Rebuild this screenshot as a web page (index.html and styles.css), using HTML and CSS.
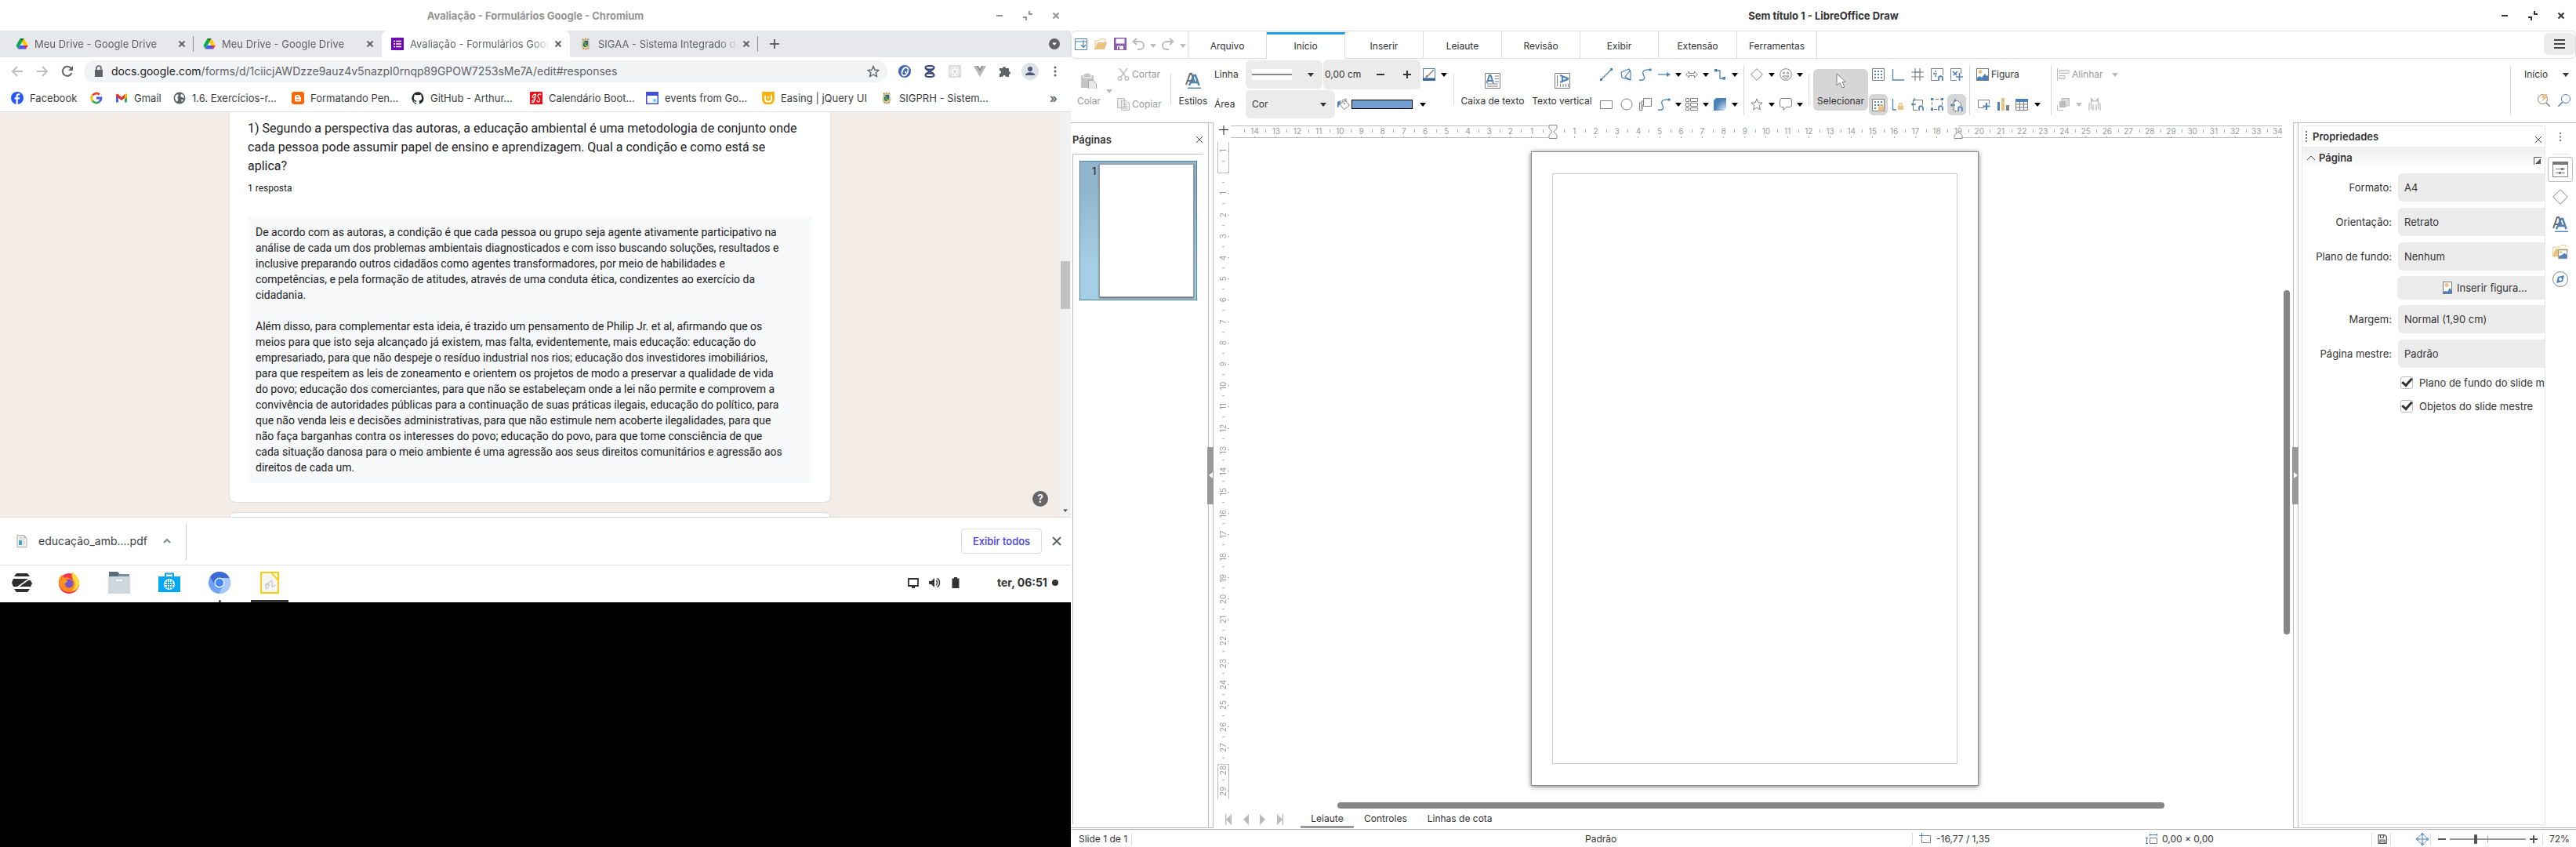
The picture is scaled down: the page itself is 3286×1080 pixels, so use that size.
FILE: index.html
```html
<!DOCTYPE html>
<html lang="pt-BR">
<head>
<meta charset="utf-8">
<title>Área de trabalho</title>
<link rel="stylesheet" href="styles.css">
</head>
<body>
<svg class="sprite" aria-hidden="true">
  <symbol id="min" viewBox="0 0 16 16"><path d="M4 8h8" stroke="currentColor" stroke-width="2"/></symbol>
  <symbol id="restore" viewBox="0 0 16 16"><path d="M10 2v4h4M2 10h4v4" fill="none" stroke="currentColor" stroke-width="2"/></symbol>
  <symbol id="close" viewBox="0 0 16 16"><path d="M4.500 4.500l7 7M11.500 4.500l-7 7" stroke="currentColor" stroke-width="2"/></symbol>
  <symbol id="thinclose" viewBox="0 0 16 16"><path d="M4 4l8 8M12 4l-8 8" stroke="currentColor" stroke-width="1"/></symbol>
  <symbol id="caret" viewBox="0 0 8 5"><path d="M0 0h8L4 5z" fill="currentColor"/></symbol>
  <symbol id="drive" viewBox="0 0 16 16"><path d="M5.500 1L0.500 10l2.500 4.500L8 5.500z" fill="#0bab50"/><path d="M5.500 1h5l5 9h-5z" fill="#ffc800"/><path d="M3 14.500L5.500 10h10L13 14.500z" fill="#4a52f0"/><path d="M10.500 10h5L13 14.500z" fill="#ea3434"/><path d="M5.500 1h5L8 5.500z" fill="#087f3b"/></symbol>
  <symbol id="crest" viewBox="0 0 16 16"><path d="M3.500 2h9v4l1 4-2 4.500h-7L2.500 10l1-4z" fill="#c7bfa0"/><path d="M4 1h1.500v2H4zM7.200 0.500h1.600v2H7.200zM10.500 1H12v2h-1.500z" fill="#c9973b"/><path d="M5 4h6v6l-3 3-3-3z" fill="#235d9c"/><path d="M5 4l3 2 3 5-2 1-4-6z" fill="#f0d13a"/><path d="M6 6l4 4M5.500 9l2 2.500" stroke="#198444" stroke-width="1.500"/><path d="M3 12h10l-1 3-4 .8L4 15z" fill="#dcc9a0"/><path d="M5 13.500h1M8 14.500h1M10.500 13.500h1" stroke="#c94c36"/></symbol>
  <symbol id="pic" viewBox="0 0 16 16"><rect x=".5" y=".5" width="15" height="15" fill="#fff" stroke="#7a7a7a"/><circle cx="5" cy="4.500" r="2.500" fill="#eac282"/><path d="M1 15v-3l3-2 3 2 4-5 2 3 2-1v6z" fill="#4d82b8"/></symbol>
  <symbol id="styles" viewBox="0 0 20 20"><path d="M1 15L6 1h2l4 11M3 10h7" fill="none" stroke="#6b6b6b" stroke-width="2"/><path d="M5 16L11 3h2l4.500 13M7.500 12h8" fill="none" stroke="#4d82b8" stroke-width="2.500"/><path d="M3 19.300h17" stroke="#4d82b8" stroke-width="1.500"/></symbol>
  <symbol id="lock" viewBox="0 0 10 10"><path d="M1 4h8v6H1z" fill="#eac282"/><path d="M3 4V1h4v3" fill="none" stroke="#eac282" stroke-width="1.500"/></symbol>
  <symbol id="magnet" viewBox="0 0 8 8"><path d="M1.200 8V4a2.800 2.800 0 0 1 5.600 0v4" fill="none" stroke="#4d82b8" stroke-width="2"/></symbol>
</svg>

<section class="desktop">
  <header class="titlebar inactive">
    <h1>Avaliação - Formulários Google - Chromium</h1>
    <div class="winbtns">
      <button aria-label="Minimizar"><svg><use href="#min"/></svg></button>
      <button aria-label="Restaurar"><svg><use href="#restore"/></svg></button>
      <button aria-label="Fechar"><svg><use href="#close"/></svg></button>
    </div>
  </header>
  <nav class="tabs">
    <div class="tab"><svg><use href="#drive"/></svg><a href="#">Meu Drive - Google Drive</a><button aria-label="Fechar guia"><svg><use href="#close"/></svg></button></div>
    <div class="tab before-active"><svg><use href="#drive"/></svg><a href="#">Meu Drive - Google Drive</a><button aria-label="Fechar guia"><svg><use href="#close"/></svg></button></div>
    <div class="tab active"><svg viewBox="0 0 16 16"><path d="M0 0h16v16H0z" fill="#7208b8"/><path d="M3 4.500h2M3 8h2M3 11.500h2M6 4.500h7M6 8h7M6 11.500h7" stroke="#fff" stroke-width="1.700"/></svg><a href="#">Avaliação - Formulários Google</a><button aria-label="Fechar guia"><svg><use href="#close"/></svg></button></div>
    <div class="tab after-active"><svg><use href="#crest"/></svg><a href="#">SIGAA - Sistema Integrado de</a><button aria-label="Fechar guia"><svg><use href="#close"/></svg></button></div>
    <button class="newtab" aria-label="Nova guia"><svg viewBox="0 0 16 16"><path d="M8 2v12M2 8h12" stroke="#5f6368" stroke-width="2"/></svg></button>
    <button class="tabmenu" aria-label="Pesquisar guias"><svg viewBox="0 0 16 16"><circle cx="8" cy="8" r="7" fill="#5f6368"/><path d="M5 6.500h6L8 10z" fill="#fff"/></svg></button>
  </nav>
  <div class="addressbar">
    <button aria-label="Voltar"><svg viewBox="0 0 16 16"><path d="M15 8H2M8 2L2 8l6 6" fill="none" stroke="#bcbec1" stroke-width="2"/></svg></button>
    <button aria-label="Avançar"><svg viewBox="0 0 16 16"><path d="M1 8h13M8 2l6 6-6 6" fill="none" stroke="#bcbec1" stroke-width="2"/></svg></button>
    <button aria-label="Recarregar"><svg viewBox="0 0 16 16"><path d="M13.500 10A6 6 0 1 1 12.500 4" fill="none" stroke="#5f6368" stroke-width="2"/><path d="M15 1v6H9z" fill="#5f6368"/></svg></button>
    <div class="omnibox">
      <svg viewBox="0 0 16 16"><path d="M3 6h10v9H3z" fill="#5f6368"/><path d="M5 6.500V4a3 3 0 0 1 6 0v2.500" fill="none" stroke="#5f6368" stroke-width="1.700"/></svg>
      <div class="url" role="textbox" aria-label="Endereço"><b>docs.google.com</b>/forms/d/1ciicjAWDzze9auz4v5nazpI0rnqp89GPOW7253sMe7A/edit#responses</div>
      <button aria-label="Favoritar"><svg viewBox="0 0 16 16"><path d="M8 1.500l2 4.500 5 .5-3.800 3.200 1.200 4.800L8 12l-4.400 2.500 1.200-4.800L1 6.500 6 6z" fill="none" stroke="#5f6368" stroke-width="1.400"/></svg></button>
    </div>
    <div class="exts">
      <svg viewBox="0 0 16 16"><circle cx="8" cy="8" r="8" fill="#3f63b8"/><ellipse cx="8.500" cy="8" rx="3.500" ry="5.500" transform="rotate(25 8 8)" fill="none" stroke="#fff" stroke-width="2"/><circle cx="9" cy="9" r="1.200" fill="#fff"/></svg>
      <svg viewBox="0 0 16 16"><g fill="none" stroke="#31427a" stroke-width="2"><ellipse cx="8" cy="3.200" rx="5.500" ry="2.300"/><path d="M3 5l10 6M13 5L3 11"/><ellipse cx="8" cy="12.800" rx="5.500" ry="2.300"/></g></svg>
      <svg viewBox="0 0 16 16"><path d="M0 0h16v16H0z" fill="#dcdcdc"/><g fill="none" stroke="#fff"><ellipse cx="8" cy="8" rx="6.500" ry="2.500"/><ellipse cx="8" cy="8" rx="6.500" ry="2.500" transform="rotate(60 8 8)"/><ellipse cx="8" cy="8" rx="6.500" ry="2.500" transform="rotate(120 8 8)"/></g></svg>
      <svg viewBox="0 0 16 16"><path d="M0 1h3.500L8 9l4.500-8H16L8 15z" fill="#b7b7b7"/><path d="M3.500 1H6l2 3.500L10 1h2.500L8 9z" fill="#8d8d8d"/></svg>
      <svg viewBox="0 0 16 16"><path d="M1 4h4a2 2 0 1 1 4 0h4v4a2 2 0 1 1 0 4v3H9a2 2 0 0 0-4 0H1v-4a2 2 0 0 0 0-4z" fill="#5f6368"/></svg>
      <svg class="avatar" viewBox="0 0 22 22"><circle cx="11" cy="11" r="11" fill="#dfe1e8"/><circle cx="11" cy="8" r="3" fill="#4c5675"/><path d="M5 16c0-5 12-5 12 0z" fill="#4c5675"/></svg>
      <svg viewBox="0 0 16 16"><g fill="#5f6368"><circle cx="8" cy="3" r="1.500"/><circle cx="8" cy="8" r="1.500"/><circle cx="8" cy="13" r="1.500"/></g></svg>
    </div>
  </div>
  <nav class="bookmarks">
    <a class="bm-fb" href="#"><svg viewBox="0 0 16 16"><circle cx="8" cy="8" r="8" fill="#2457f5"/><path d="M8.800 16V9.500H11l.4-2.300H8.800V5.800c0-.8.4-1.300 1.300-1.300h1.300V2.600C9 2 6.500 2.400 6.500 5.400v1.800h-2v2.300h2V16z" fill="#fff"/></svg>Facebook</a>
    <a class="bm-g" href="#" aria-label="Google"><svg viewBox="0 0 16 16"><g fill="none" stroke-width="2.800"><path d="M3.200 4.500A6 6 0 0 1 12 3.500" stroke="#ea4335"/><path d="M3 11.500a6 6 0 0 1 0-7" stroke="#fbbc05"/><path d="M12 12.500a6 6 0 0 1-9-1" stroke="#34a853"/><path d="M8 8h6c0 2-.6 3.300-2 4.500" stroke="#4a55f5"/></g></svg></a>
    <a class="bm-gm" href="#"><svg viewBox="0 0 16 16"><path d="M1 13.500V4h3v9.500z" fill="#4a5cf0"/><path d="M12 13.500V4h3v9.500z" fill="#34a853"/><path d="M1 3.500l2-1L8 7l5-4.500 2 1v2L8 11 1 5.500z" fill="#ea3030"/><path d="M12 4l1-1.500 2 1V7l-3 2z" fill="#fbbc04"/></svg>Gmail</a>
    <a class="bm-ex" href="#"><svg viewBox="0 0 16 16"><circle cx="8" cy="8" r="7.500" fill="#5f6368"/><path d="M3 5c3-3 5-1 3 1s1 2 0 5-3 0-4-3zM10 3c3 0 4 3 4 5l-3-1c-2 0-2-3-1-4zM10 10l3 0-2 3z" fill="#fff"/></svg>1.6. Exercícios-r...</a>
    <a class="bm-bl" href="#"><svg viewBox="0 0 16 16"><rect width="16" height="16" rx="3" fill="#ff6600"/><path d="M4 6.500A2.500 2.500 0 0 1 6.500 4h2A2.500 2.500 0 0 1 11 6.500c0 .7.300.8 1 .8V10a2.500 2.500 0 0 1-2.500 2.500h-3A2.500 2.500 0 0 1 4 10z" fill="#fff"/><path d="M6.500 6.700h2M6.500 9.800h3" stroke="#ff6600" stroke-width="1.300" stroke-linecap="round"/></svg>Formatando Pen...</a>
    <a class="bm-gh" href="#"><svg viewBox="0 0 16 16"><path d="M8 .3a8 8 0 0 0-2.500 15.500c.4.100.5-.2.500-.4v-1.500c-2.200.5-2.700-1-2.700-1-.4-1-.9-1.200-.9-1.200-.7-.5.1-.5.100-.5.800.1 1.200.8 1.200.8.700 1.300 1.900.9 2.300.7.100-.5.300-.9.500-1.100-1.800-.2-3.600-.9-3.600-4 0-.9.300-1.600.8-2.100-.1-.2-.4-1 .1-2.100 0 0 .7-.2 2.200.8a7.700 7.700 0 0 1 4 0c1.500-1 2.200-.8 2.200-.8.4 1.100.2 1.900.1 2.100.5.600.8 1.300.8 2.100 0 3.100-1.900 3.700-3.700 3.900.3.300.6.800.6 1.500v2.200c0 .2.100.5.600.4A8 8 0 0 0 8 .3z" fill="#24292e"/></svg>GitHub - Arthur...</a>
    <a class="bm-js" href="#"><svg viewBox="0 0 16 16"><rect width="16" height="16" rx="1" fill="#f00a14"/><path d="M7 3C4 3 2 7 4 7.500S8 3 7.500 3L5.500 12c-.5 2-3 2-3 .5s3-2.500 5-3.500M14 4c-1-2-4-1-4 1.500S13 8 12.500 11s-4 2.500-3.500 0" fill="none" stroke="#fff" stroke-width="1.200"/></svg>Calendário Boot...</a>
    <a class="bm-ev" href="#"><svg viewBox="0 0 16 16"><path d="M0 0h16v16H0z" fill="#3f51d8"/><path d="M1.500 5h13v9.500h-13z" fill="#fff"/><circle cx="11" cy="11" r="2" fill="#3adcf2"/></svg>events from Go...</a>
    <a class="bm-ea" href="#"><svg viewBox="0 0 16 16"><path d="M0 0h16v9a7.500 7.500 0 0 1-16 0z" fill="#fbb10a"/><path d="M4 5v4c0 5 8 5 8 0V4" fill="none" stroke="#fff" stroke-width="2"/><circle cx="8" cy="7" r="1.300" fill="#fff"/></svg>Easing | jQuery UI</a>
    <a class="bm-si" href="#"><svg><use href="#crest"/></svg>SIGPRH - Sistem...</a>
    <button class="more" aria-label="Mais favoritos">»</button>
  </nav>
  <main class="viewport">
    <div class="formpage">
      <article class="card">
        <h2>1) Segundo a perspectiva das autoras, a educação ambiental é uma metodologia de conjunto onde<br>cada pessoa pode assumir papel de ensino e aprendizagem. Qual a condição e como está se<br>aplica?</h2>
        <p class="count">1 resposta</p>
        <div class="answer">
          <p>De acordo com as autoras, a condição é que cada pessoa ou grupo seja agente ativamente participativo na<br>análise de cada um dos problemas ambientais diagnosticados e com isso buscando soluções, resultados e<br>inclusive preparando outros cidadãos como agentes transformadores, por meio de habilidades e<br>competências, e pela formação de atitudes, através de uma conduta ética, condizentes ao exercício da<br>cidadania.</p>
          <p>Além disso, para complementar esta ideia, é trazido um pensamento de Philip Jr. et al, afirmando que os<br>meios para que isto seja alcançado já existem, mas falta, evidentemente, mais educação: educação do<br>empresariado, para que não despeje o resíduo industrial nos rios; educação dos investidores imobiliários,<br>para que respeitem as leis de zoneamento e orientem os projetos de modo a preservar a qualidade de vida<br>do povo; educação dos comerciantes, para que não se estabeleçam onde a lei não permite e comprovem a<br>convivência de autoridades públicas para a continuação de suas práticas ilegais, educação do político, para<br>que não venda leis e decisões administrativas, para que não estimule nem acoberte ilegalidades, para que<br>não faça barganhas contra os interesses do povo; educação do povo, para que tome consciência de que<br>cada situação danosa para o meio ambiente é uma agressão aos seus direitos comunitários e agressão aos<br>direitos de cada um.</p>
        </div>
      </article>
      <article class="card next"></article>
    </div>
    <div class="vscroll"><i></i><svg viewBox="0 0 8 5"><use href="#caret"/></svg></div>
    <button class="help" aria-label="Ajuda">?</button>
  </main>
  <div class="downloads">
    <button class="file"><svg viewBox="0 0 16 16"><path d="M2 .5h8.500L14 4v11.500H2z" fill="#f4f4f0" stroke="#a9a9a4"/><path d="M10.500.5V4H14z" fill="#b5b5ae"/><path d="M4 3h5M4 5h8M9 8h3M9 10h3M9 12h3" stroke="#c9c9c4"/><path d="M4 7h4v6H4z" fill="#3ca6c8"/></svg><span>educação_amb....pdf</span><svg class="up" viewBox="0 0 16 16"><path d="M4 10l4-4 4 4" fill="none" stroke="#80868b" stroke-width="2"/></svg></button>
    <button class="showall">Exibir todos</button>
    <button class="dlclose" aria-label="Fechar"><svg viewBox="0 0 16 16"><path d="M3 3l10 10M13 3L3 13" stroke="#5f6368" stroke-width="2"/></svg></button>
  </div>
  <footer class="taskbar">
    <button aria-label="Menu"><svg viewBox="0 0 28 28"><path d="M7 2h14l3 4H4zM4 22h20l-3 4H7zM3 9h19L8 19H3l-2-5zM25 19H11l11-8h3l2 4z" fill="#2f2f2f"/></svg></button>
    <button aria-label="Firefox"><svg viewBox="0 0 28 28"><circle cx="14" cy="15" r="13" fill="#f7374e"/><path d="M1 14C1 8 3 6 5 4l3 4c3-2 5-1 7 1l4 1c0-5-2-6-1-9 5 4 9 8 9 14 0 7-6 11-12 11S1 22 1 14z" fill="#ff8a1c"/><path d="M18 0c5 4 10 9 9 16-1 5-5 8-9 8 4-4 5-9 2-13-2-3-3-6-2-11z" fill="#ffd93a"/><circle cx="14" cy="15" r="5.500" fill="#7b54c9"/><path d="M3 12c4-2 7-2 9 0l-3 3c-2 0-4-1-6-3z" fill="#ff9d26"/></svg></button>
    <button aria-label="Arquivos"><svg viewBox="0 0 28 28"><path d="M1 0h11l3 3h12v6H1z" fill="#546e7a"/><path d="M13 3h14v3H13z" fill="#78909c"/><path d="M0 6h28v22H0z" fill="#cfd8dc"/><path d="M9.500 9.500h9v3h-9z" fill="#fff" stroke="#b0bec5" stroke-width=".5"/></svg></button>
    <button aria-label="Programas"><svg viewBox="0 0 28 28"><path d="M9 7V2.500h10V7" fill="none" stroke="#0aa1e4" stroke-width="2"/><path d="M0 6h28v20H0z" fill="#04a9f4"/><circle cx="14" cy="16" r="7" fill="#fff"/><path d="M9 13.500h10M8 16.500h12M9 19.500h10M11.500 10.500v11M14.500 9.500v13M17.500 10.500v11" stroke="#04a9f4"/></svg></button>
    <button class="running" aria-label="Chromium"><svg viewBox="0 0 28 28"><circle cx="14" cy="14" r="14" fill="#6ea3f7"/><path d="M14 8H26.600A14 14 0 0 0 2 6.800L8.500 17A6 6 0 0 1 14 8z" fill="#3c6bd6"/><path d="M13 28A14 14 0 0 0 26.600 8H17a7 7 0 0 1 2 10z" fill="#a9c8fb"/><circle cx="14" cy="14" r="6.500" fill="#e8f0ff"/><circle cx="14" cy="14" r="5" fill="#4285f4"/></svg></button>
    <button class="focused" aria-label="LibreOffice Draw"><svg viewBox="0 0 28 28"><path d="M3 1h22v26H3z" fill="#f5f5f5" stroke="#fbcc12" stroke-width="2"/><path d="M16 1h9v10z" fill="#fff" stroke="#fbcc12" stroke-width="2"/><path d="M8 17c2-2 5-3 5 0s-4 7-4 3 4-6 6-8 3 2 2 5 1 3 4 0" fill="none" stroke="#c4c4c4" stroke-width="1.200"/></svg></button>
    <div class="tray">
      <svg viewBox="0 0 16 16"><path d="M2 3h12v9H2zM6 14h4" fill="none" stroke="#333" stroke-width="1.800"/></svg>
      <svg viewBox="0 0 16 16"><path d="M1 6h3l4-4v12L4 10H1z" fill="#333"/><path d="M10 5c2 1 2 5 0 6M11.500 2.500c4 2 4 9 0 11" fill="none" stroke="#333" stroke-width="1.400"/></svg>
      <svg viewBox="0 0 16 16"><path d="M6 1h4v1.500h2.500V15h-9V2.500H6z" fill="#333"/></svg>
      <time>ter, 06:51</time><i></i>
    </div>
  </footer>
</section>

<section class="draw">
  <header class="titlebar">
    <h1>Sem título 1 - LibreOffice Draw</h1>
    <div class="winbtns">
      <button aria-label="Minimizar"><svg><use href="#min"/></svg></button>
      <button aria-label="Restaurar"><svg><use href="#restore"/></svg></button>
      <button aria-label="Fechar"><svg><use href="#close"/></svg></button>
    </div>
  </header>
  <nav class="menubar">
    <div class="quick">
      <button aria-label="Personalizar"><svg viewBox="0 0 16 16"><path d="M.5 1.500h15v14H.5zM.5 5h15" fill="none" stroke="#4d82b8"/><path d="M11 3v9M8 9l3 3.500L14 9" fill="none" stroke="#4d82b8" stroke-width="1.200"/></svg></button>
      <button aria-label="Abrir"><svg viewBox="0 0 16 16"><path d="M1 14V4h4l2-2h7v4" fill="none" stroke="#eac282"/><path d="M0 15L4 6h12l-3 9z" fill="#eac282"/></svg></button>
      <button aria-label="Salvar"><svg viewBox="0 0 16 16"><path d="M0 0h16v16H0z" fill="#8e5aab"/><path d="M2.500 1.500h11v6h-11zM4 10.500h8V15H4z" fill="#fff"/><path d="M5 11.500h2V15H5z" fill="#8e5aab"/></svg></button>
      <button aria-label="Desfazer"><svg viewBox="0 0 16 16"><path d="M6 1L1.500 5 6 9M2 5h8a4.500 4.500 0 0 1 0 10H7" fill="none" stroke="#bcbcbc" stroke-width="2"/></svg></button>
      <svg class="car off"><use href="#caret"/></svg>
      <button aria-label="Refazer"><svg viewBox="0 0 16 16"><path d="M10 1l4.500 4L10 9M14 5H6a4.500 4.500 0 0 0 0 10h3" fill="none" stroke="#bcbcbc" stroke-width="2"/></svg></button>
      <svg class="car off"><use href="#caret"/></svg>
    </div>
    <a href="#">Arquivo</a><a class="current" href="#">Início</a><a href="#">Inserir</a><a href="#">Leiaute</a><a href="#">Revisão</a><a href="#">Exibir</a><a href="#">Extensão</a><a href="#">Ferramentas</a>
    <button class="burger" aria-label="Menu"><svg viewBox="0 0 16 16"><path d="M1 3h14M1 8h14M1 13h14" stroke="#444" stroke-width="2"/></svg></button>
  </nav>

  <div class="toolbar">
    <button class="big paste off"><svg viewBox="0 0 20 20"><path d="M0 3h16v16H0z" fill="#c4c4c4"/><path d="M3 1h3V0h4v1h3v5H3z" fill="#c4c4c4" stroke="#fff"/><path d="M9.500 9.500h6l4 4v7h-10z" fill="#e8e8e8" stroke="#aaa"/></svg>Colar</button>
    <svg class="car off paste-car"><use href="#caret"/></svg>
    <div class="stack edit">
      <button class="wide off"><svg viewBox="0 0 16 16"><path d="M3 0l8 11M13 0L5 11" stroke="#bbb" stroke-width="1.300"/><circle cx="3.500" cy="13" r="2.300" fill="none" stroke="#bbb" stroke-width="1.300"/><circle cx="12.500" cy="13" r="2.300" fill="none" stroke="#bbb" stroke-width="1.300"/></svg>Cortar</button>
      <button class="wide off"><svg viewBox="0 0 16 16"><path d="M.5.500h9v12h-9zM5.500 3.500h6l4 3v9h-10zM7 8h6M7 10.500h6M7 13h6" fill="#eee" stroke="#bbb"/></svg>Copiar</button>
    </div>
    <i class="sep"></i>
    <button class="big est"><svg><use href="#styles"/></svg>Estilos</button>
    <div class="stack labels"><label for="line">Linha</label><label for="area">Área</label></div>
    <div class="stack props">
      <div class="row">
        <div class="linesel"><select id="line" aria-label="Linha"><option></option></select><i></i><svg class="car"><use href="#caret"/></svg></div>
        <div class="spin"><input value="0,00 cm" aria-label="Largura da linha"><button aria-label="Menos"><svg viewBox="0 0 16 16"><path d="M3 8h10" stroke="#333" stroke-width="2"/></svg></button><button aria-label="Mais"><svg viewBox="0 0 16 16"><path d="M3 8h10M8 3v10" stroke="#333" stroke-width="2"/></svg></button></div>
        <button class="ic" aria-label="Cor da linha"><svg viewBox="0 0 16 16"><path d="M.5.500h15V15H.5z" fill="#fff" stroke="#4d82b8"/><path d="M0 12.500h16V16H0z" fill="#3465a4"/><path d="M14 2L6 10l-2 2 1-3" fill="none" stroke="#777" stroke-width="1.300"/></svg></button>
        <svg class="car black"><use href="#caret"/></svg>
      </div>
      <div class="row">
        <div class="areasel"><select id="area"><option>Cor</option></select><svg class="car"><use href="#caret"/></svg></div>
        <button class="ic" aria-label="Cor da área"><svg viewBox="0 0 16 16"><path d="M0 12V5l4-2v3l-3 6z" fill="#4d82b8"/><path d="M3 8l7-5 5.500 6.500-7 5z" fill="#fff" stroke="#808080"/><path d="M6 6V3l5-2v4" fill="none" stroke="#808080"/><circle cx="9" cy="7" r="1" fill="#808080"/></svg></button>
        <i class="swatch"></i>
        <svg class="car black"><use href="#caret"/></svg>
      </div>
    </div>
    <i class="sep"></i>
    <button class="big txt"><svg viewBox="0 0 20 20"><path d="M.5.500h19v19H.5zM13 4h5M13 7.500h5M13 11h5M3 14h14M3 17h14" fill="none" stroke="#808080"/><path d="M2.500 13L6 3h1.500L11 13M4 10h6" fill="none" stroke="#4d82b8" stroke-width="2"/></svg>Caixa de texto</button>
    <button class="big vtxt"><svg viewBox="0 0 20 20"><path d="M.5.500h19v19H.5zM3.500 3v14M7.500 14v4M11 14v4M14.500 14v4M17.500 14v4" fill="none" stroke="#808080"/><path d="M7 3l10 4v1L7 12M10 4v7" fill="none" stroke="#4d82b8" stroke-width="2"/></svg>Texto vertical</button>
    <div class="grid lines">
      <svg viewBox="0 0 16 16"><path d="M2 14L14 2" stroke="#4d82b8" stroke-width="1.300"/><path d="M0 13h3v3H0zM13 0h3v3h-3z" fill="#4d82b8"/></svg>
      <svg viewBox="0 0 16 16"><path d="M1 5l10-4 2 4 0 10L2 12zM13 2L6 11l7 4" fill="none" stroke="#4d82b8" stroke-width="1.200"/></svg>
      <svg viewBox="0 0 16 16"><path d="M0 15c5 1 8-1 6-5S3 1 14 2" fill="none" stroke="#4d82b8" stroke-width="1.300"/><path d="M12.500.500h3v3h-3z" fill="#4d82b8"/></svg>
      <svg viewBox="0 0 16 16"><path d="M0 8h12" stroke="#4d82b8" stroke-width="1.300"/><path d="M11 5l5 3-5 3z" fill="#4d82b8"/></svg>
      <svg class="car black"><use href="#caret"/></svg>
      <svg viewBox="0 0 16 16"><path d="M.5 8L4.500 4v2.500h7V4l4 4-4 4V9.500h-7V12z" fill="none" stroke="#808080"/></svg>
      <svg class="car black"><use href="#caret"/></svg>
      <svg viewBox="0 0 16 16"><path d="M3 3h5v10h4" fill="none" stroke="#4d82b8" stroke-width="1.300"/><path d="M1 1h3.500v3.500H1zM11.500 11H15v3.500h-3.500z" fill="#4d82b8"/></svg>
      <svg class="car black"><use href="#caret"/></svg>
      <svg viewBox="0 0 16 16"><path d="M.5 3.500h15v10H.5z" fill="none" stroke="#808080"/></svg>
      <svg viewBox="0 0 16 16"><circle cx="8" cy="8" r="7" fill="none" stroke="#808080"/></svg>
      <svg viewBox="0 0 16 16"><path d="M5.500.500h10v10h-10zM5 4H3v10M.5 15.500V6H3M.5 15.500H4V8" fill="none" stroke="#808080"/></svg>
      <svg viewBox="0 0 16 16"><path d="M0 15c5 1 8-1 6-5S3 1 14 2" fill="none" stroke="#4d82b8" stroke-width="1.300"/><path d="M12.500.500h3v3h-3z" fill="#4d82b8"/></svg>
      <svg class="car black"><use href="#caret"/></svg>
      <svg viewBox="0 0 16 16"><path d="M.5.500h4v4h-4zM6.500.500h9v4h-9zM.5 6.500h4v4h-4zM6.500 6.500h9v4h-9zM.5 12.500h4v3h-4zM6.500 12.500h9v3h-9z" fill="none" stroke="#808080"/></svg>
      <svg class="car black"><use href="#caret"/></svg>
      <svg viewBox="0 0 16 16"><defs><radialGradient id="gr" cx="1" cy="1" r=".9"><stop offset="0" stop-color="#e6eef7"/><stop offset="1" stop-color="#4d82b8"/></radialGradient></defs><path d="M3 0h13v13l-3 3H0V3z" fill="url(#gr)"/></svg>
      <svg class="car black"><use href="#caret"/></svg>
    </div>
    <i class="sep tall"></i>
    <div class="grid shapes">
      <svg viewBox="0 0 16 16"><path d="M8 .7L15.300 8 8 15.300.7 8z" fill="none" stroke="#808080"/></svg>
      <svg class="car black"><use href="#caret"/></svg>
      <svg viewBox="0 0 16 16"><circle cx="8" cy="8" r="7.300" fill="none" stroke="#808080"/><circle cx="5.500" cy="6" r="1" fill="none" stroke="#808080"/><circle cx="10.500" cy="6" r="1" fill="none" stroke="#808080"/><path d="M4 10c2 4 6 4 8 0z" fill="none" stroke="#808080"/></svg>
      <svg class="car black"><use href="#caret"/></svg>
      <svg viewBox="0 0 16 16"><path d="M8 1l2 5h5l-4 3.500 1.500 5.500L8 12l-4.500 3L5 9.500 1 6h5z" fill="none" stroke="#808080"/></svg>
      <svg class="car black"><use href="#caret"/></svg>
      <svg viewBox="0 0 16 16"><path d="M3 .5h10a2.500 2.500 0 0 1 2.500 2.500v6a2.500 2.500 0 0 1-2.500 2.500H8.500L5 15.500v-4H3A2.500 2.500 0 0 1 .5 9V3A2.500 2.500 0 0 1 3 .5z" fill="none" stroke="#808080"/></svg>
      <svg class="car black"><use href="#caret"/></svg>
    </div>
    <i class="sep mid"></i>
    <button class="big select"><svg viewBox="0 0 20 20"><path d="M5 1v15l4-3.500L12 19l3-1-3-6.500h4.500z" fill="#fff" stroke="#808080"/></svg>Selecionar</button>
    <div class="grid snaps">
      <svg viewBox="0 0 16 16"><path d="M.5.500h15v15H.5z" fill="#fff" stroke="#808080"/><path d="M3 4h11M3 8h11M3 12h11" stroke="#4d82b8" stroke-width="2" stroke-dasharray="2 2"/></svg>
      <svg viewBox="0 0 16 16"><path d="M1.500 1v14H16" fill="none" stroke="#4d82b8" stroke-width="1.300"/></svg>
      <svg viewBox="0 0 16 16"><path d="M5 0v16M11 0v16M0 5h16M0 11h16" stroke="#808080" stroke-width="1.200"/><path d="M4.500 5h7" stroke="#4d82b8"/></svg>
      <svg viewBox="0 0 16 16"><path d="M9 15.500H.5V.5h15V9" fill="none" stroke="#808080"/><path d="M6 3v8M3 7h6" stroke="#4d82b8" stroke-width="1.500" stroke-dasharray="2 1"/><use href="#magnet" x="9" y="9" width="7" height="7"/></svg>
      <svg viewBox="0 0 16 16"><path d="M8 15.500H.5V.5h13V7" fill="none" stroke="#808080"/><path d="M3 4l5 5M9 4L4 9M11.500 6v10M7 11h9" stroke="#4d82b8" stroke-width="1.700"/></svg>
      <span class="on"><svg viewBox="0 0 16 16"><path d="M.5.500h15v15H.5z" fill="#fff" stroke="#808080"/><path d="M3 4h11M3 8h11M3 12h4" stroke="#4d82b8" stroke-width="2" stroke-dasharray="2 2"/><use href="#lock" x="7" y="6" width="9" height="10"/></svg></span>
      <svg viewBox="0 0 16 16"><path d="M1.500 1v14H6" fill="none" stroke="#4d82b8" stroke-width="1.300"/><use href="#lock" x="7" y="6" width="9" height="9"/></svg>
      <svg viewBox="0 0 16 16"><path d="M8 15.500H2.500V2.500h12V9" fill="none" stroke="#808080"/><path d="M0 8h6M2 6v4M4 0v4" stroke="#4d82b8" stroke-width="1.300"/><use href="#magnet" x="9" y="9" width="7" height="7"/></svg>
      <svg viewBox="0 0 16 16"><path d="M8 14.500H1.500V1.500h13V9" fill="none" stroke="#808080" stroke-dasharray="4 2"/><path d="M0 0h3v3H0zM13 0h3v3h-3zM0 13h3v3H0z" fill="#4d82b8"/><use href="#magnet" x="9" y="9" width="7" height="7"/></svg>
      <span class="on"><svg viewBox="0 0 16 16"><path d="M8 15.500H4.500V2.500h5l4 4V9" fill="#fff" stroke="#808080"/><path d="M0 8h6M2 6v4M6 0v4" stroke="#4d82b8" stroke-width="1.300"/><use href="#magnet" x="9" y="9" width="7" height="7"/></svg></span>
    </div>
    <i class="sep tall"></i>
    <div class="stack insert">
      <button class="wide"><svg><use href="#pic"/></svg>Figura</button>
      <div class="row icons">
        <svg viewBox="0 0 16 16"><path d="M8 12.500H.5v-10h14V8" fill="none" stroke="#808080"/><path d="M11 6v9M6.500 10.500h9" stroke="#4d82b8" stroke-width="2"/></svg>
        <svg viewBox="0 0 16 16"><path d="M1 5h3v11H1z" fill="#4d82b8"/><path d="M6 0h4v16H6z" fill="#eac282"/><path d="M12 9h4v7h-4z" fill="#808080"/></svg>
        <svg viewBox="0 0 16 16"><path d="M.5 1.500h15v14H.5zM.5 8h15M.5 12h15M5.500 4v11M10.500 4v11" fill="none" stroke="#808080"/><path d="M0 1h16v4H0z" fill="#4d82b8"/></svg>
        <svg class="car black"><use href="#caret"/></svg>
      </div>
    </div>
    <i class="sep tall"></i>
    <div class="stack arrange">
      <button class="wide off"><svg viewBox="0 0 16 16"><path d="M.5 0v16M3 2.500h12v4H3zM3 9.500h7v4H3z" fill="#eee" stroke="#bbb"/></svg>Alinhar<svg class="car off"><use href="#caret"/></svg></button>
      <div class="row icons">
        <svg viewBox="0 0 16 16"><path d="M6 .5h9.500V10H6z" fill="#ddd" stroke="#bbb"/><path d="M3 4h8v8H3z" fill="#bbb"/><path d="M.5 9v6.500H8" fill="none" stroke="#bbb"/></svg>
        <svg class="car off"><use href="#caret"/></svg>
        <svg viewBox="0 0 16 16"><path d="M1 6v10M3.500 0v14M12.500 0v14M15 6v10M6 16V8M10 16V8M4 4h8M4 1l3 3M12 1L9 4" fill="none" stroke="#bbb" stroke-width="1.200"/></svg>
      </div>
    </div>
    <div class="grow"></div>
    <i class="sep tall"></i>
    <div class="stack home">
      <button class="wide">Início<svg class="car"><use href="#caret"/></svg></button>
      <div class="row icons">
        <svg viewBox="0 0 16 16"><circle cx="6.500" cy="6.500" r="6" fill="none" stroke="#808080"/><path d="M11 11l5 5" stroke="#808080" stroke-width="1.500"/><path d="M7 0h6l-3 4h2l-7 6 2-5H5z" fill="#eac282"/></svg>
        <svg viewBox="0 0 16 16"><circle cx="10" cy="6" r="5.500" fill="none" stroke="#4d82b8"/><path d="M6 10l-6 6" stroke="#4d82b8" stroke-width="1.500"/></svg>
      </div>
    </div>
  </div>

  <div class="work">
    <aside class="pages">
      <header><h2>Páginas</h2><button aria-label="Fechar"><svg><use href="#thinclose"/></svg></button></header>
      <div class="list"><button class="thumb"><b>1</b><i></i></button></div>
    </aside>
    <div class="splitter"><i><svg viewBox="0 0 5 8"><path d="M5 0v8L0 4z" fill="#fff"/></svg></i></div>
    <div class="editor">
      <div class="corner"><svg viewBox="0 0 16 16"><path d="M8 2v12M2 7.500h12" stroke="#222"/></svg></div>
      <div class="hruler">
        <div class="cells"><span>14</span><span>13</span><span>12</span><span>11</span><span>10</span><span>9</span><span>8</span><span>7</span><span>6</span><span>5</span><span>4</span><span>3</span><span>2</span><span>1</span><span></span><span>1</span><span>2</span><span>3</span><span>4</span><span>5</span><span>6</span><span>7</span><span>8</span><span>9</span><span>10</span><span>11</span><span>12</span><span>13</span><span>14</span><span>15</span><span>16</span><span>17</span><span>18</span><span>19</span><span>20</span><span>21</span><span>22</span><span>23</span><span>24</span><span>25</span><span>26</span><span>27</span><span>28</span><span>29</span><span>30</span><span>31</span><span>32</span><span>33</span><span>34</span></div>
        <svg class="mark start" viewBox="0 0 12 18"><path d="M1 .500h10v4l-4 4.500 4 4.500v4H1v-4L5 9 1 4.500z" fill="#fff" stroke="#888"/></svg>
        <svg class="mark end" viewBox="0 0 12 18"><path d="M1 17.500v-4L6 9l5 4.500v4z" fill="#fff" stroke="#888"/></svg>
      </div>
      <div class="vruler"><div class="cells"><span>1</span><span></span><span>1</span><span>2</span><span>3</span><span>4</span><span>5</span><span>6</span><span>7</span><span>8</span><span>9</span><span>10</span><span>11</span><span>12</span><span>13</span><span>14</span><span>15</span><span>16</span><span>17</span><span>18</span><span>19</span><span>20</span><span>21</span><span>22</span><span>23</span><span>24</span><span>25</span><span>26</span><span>27</span><span>28</span><span>29</span></div></div>
      <div class="canvas"><div class="sheet"><div class="margins"></div></div></div>
      <div class="vbar"><i></i></div>
      <div class="hbar"><i></i></div>
      <nav class="layers">
        <button aria-label="Primeira"><svg viewBox="0 0 8 14"><path d="M.7 0v14" stroke="#bbb" stroke-width="1.400"/><path d="M8 0v14L1 7z" fill="#bbb"/></svg></button>
        <button aria-label="Anterior"><svg viewBox="0 0 8 14"><path d="M8 0v14L1 7z" fill="#bbb"/></svg></button>
        <button aria-label="Próxima"><svg viewBox="0 0 8 14"><path d="M0 0v14l7-7z" fill="#bbb"/></svg></button>
        <button aria-label="Última"><svg viewBox="0 0 8 14"><path d="M7.300 0v14" stroke="#bbb" stroke-width="1.400"/><path d="M0 0v14l7-7z" fill="#bbb"/></svg></button>
        <a class="current" href="#">Leiaute</a><a href="#">Controles</a><a href="#">Linhas de cota</a>
      </nav>
    </div>
    <div class="splitter right"><i><svg viewBox="0 0 5 8"><path d="M0 0v8l5-4z" fill="#fff"/></svg></i></div>
    <aside class="sidebar">
      <div class="deck">
        <header><i class="grip"></i><h2>Propriedades</h2><button aria-label="Fechar"><svg><use href="#thinclose"/></svg></button></header>
        <h3><svg viewBox="0 0 12 8"><path d="M1 7l5-5 5 5" fill="none" stroke="#444"/></svg>Página<svg class="opt" viewBox="0 0 10 10"><path d="M.5 10V.500H10" fill="none" stroke="#555"/><path d="M9 2v7H2z" fill="#555"/></svg></h3>
        <form>
          <label for="fmt">Formato:</label><select id="fmt"><option>A4</option></select>
          <label for="ori">Orientação:</label><select id="ori"><option>Retrato</option></select>
          <label for="bg">Plano de fundo:</label><select id="bg"><option>Nenhum</option></select>
          <button type="button" class="insertpic"><svg viewBox="0 0 12 16"><path d="M.5.500h11v15H.5z" fill="#fff" stroke="#7a7a7a"/><circle cx="5" cy="4.500" r="2.500" fill="#eac282"/><path d="M1 15v-2l3-1 2 1 3-5 2 3v4z" fill="#4d82b8"/></svg>Inserir figura...</button>
          <label for="mar">Margem:</label><select id="mar"><option>Normal (1,90 cm)</option></select>
          <label for="mst">Página mestre:</label><select id="mst"><option>Padrão</option></select>
          <label class="check"><input type="checkbox" checked>Plano de fundo do slide mestre</label>
          <label class="check"><input type="checkbox" checked>Objetos do slide mestre</label>
        </form>
      </div>
      <nav class="decks">
        <button aria-label="Configurações" class="dots"><svg viewBox="0 0 20 20"><path d="M9 5h2v2H9zM9 9.500h2v2H9zM9 14h2v2H9z" fill="#777"/></svg></button>
        <button aria-label="Propriedades" class="current"><svg viewBox="0 0 20 20"><path d="M.5.500h19v19H.5z" fill="#fff" stroke="#808080"/><path d="M0 0h20v4H0z" fill="#777"/><path d="M4 9.500h12M4 14.500h12" stroke="#808080"/><path d="M11 8h3v3h-3zM8 13h3v3H8z" fill="#808080"/></svg></button>
        <button aria-label="Formas"><svg viewBox="0 0 20 20"><path d="M10 .7l9.300 9.300-9.300 9.300L.7 10z" fill="none" stroke="#808080"/></svg></button>
        <button aria-label="Estilos"><svg><use href="#styles"/></svg></button>
        <button aria-label="Galeria"><svg viewBox="0 0 22 20"><path d="M.5 16V3.500h9l3-3h6V4" fill="none" stroke="#eac282"/><path d="M0 17L4 6h18l-2 11z" fill="#eac282"/><path d="M8.500 7.500h12v12h-12z" fill="#fff" stroke="#808080"/><circle cx="12" cy="10.500" r="1.700" fill="#eac282"/><path d="M9 19v-3l3-1 5-3 3 2v5z" fill="#4d82b8"/></svg></button>
        <button aria-label="Navegador"><svg viewBox="0 0 20 20"><circle cx="10" cy="10" r="9.500" fill="none" stroke="#808080"/><path d="M15 5l-2 8-8 2 2-8z" fill="#4d82b8"/><circle cx="10" cy="10" r="2" fill="#fff"/></svg></button>
      </nav>
    </aside>
  </div>

  <footer class="status">
    <span class="st-slide">Slide 1 de 1</span>
    <span class="st-master">Padrão</span>
    <span class="st-pos"><svg viewBox="0 0 16 16"><path d="M6 3.500h8.500v9h-11V8" fill="none" stroke="#808080"/><path d="M3.500 0v7M0 3.500h7" stroke="#4d82b8"/></svg>-16,77 / 1,35</span>
    <span class="st-size"><svg viewBox="0 0 16 16"><path d="M5.500 6.500h9v7h-9z" fill="none" stroke="#808080"/><path d="M5 2.500h10M5.500 1v3M14.500 1v3M1.500 6v8M0 6.500h3M0 13.500h3" stroke="#4d82b8"/></svg>0,00 × 0,00</span>
    <span class="st-save"><svg viewBox="0 0 12 12"><path d="M1 .7h8L11.300 3v8.300H1zM3.500 1v3h4V1M3 11V7h6v4M4 9h4" fill="none" stroke="#555" stroke-width="1.200"/></svg></span>
    <span class="st-fit"><svg viewBox="0 0 16 16"><path d="M8 0v16M0 8h16M6 2l2-2 2 2M6 14l2 2 2-2M2 6L0 8l2 2M14 6l2 2-2 2" fill="none" stroke="#4d82b8"/><circle cx="8" cy="8" r="5.500" fill="none" stroke="#4d82b8" stroke-width=".8"/></svg></span>
    <span class="st-zoom"><button aria-label="Reduzir"><svg viewBox="0 0 10 10"><path d="M0 5h10" stroke="#555" stroke-width="2"/></svg></button><input type="range" min="0" max="100" value="33" aria-label="Zoom"><button aria-label="Ampliar"><svg viewBox="0 0 10 10"><path d="M0 5h10M5 0v10" stroke="#555" stroke-width="2"/></svg></button></span>
    <span class="st-pct">72%</span>
  </footer>
</section>
</body>
</html>
```
FILE: styles.css
```css
* { box-sizing: border-box; }
body { margin: 0; display: flex; min-height: 100vh; background: #000; font: 12px/16px Inter, sans-serif; color: #333; }
button, input, select { font: inherit; color: inherit; background: none; border: 0; padding: 0; margin: 0; }
select { appearance: none; }
a { color: inherit; text-decoration: none; }
h1, h2, h3, p { margin: 0; }
svg { display: block; flex: none; width: 16px; height: 16px; }
.sprite { position: absolute; width: 0; height: 0; }
.car { width: 8px; height: 5px; color: #333; }
.car.black { color: #000; }
.off { color: #999; }
.car.off { color: #bbb; }

/* window frames */
.desktop { flex: 1366 1 0; aspect-ratio: 1366 / 768; align-self: flex-start; display: flex; flex-direction: column; background: #fff; overflow: hidden; min-width: 0; }
.draw { flex: 1920 1 0; min-width: 0; display: flex; flex-direction: column; background: #fff; }
.titlebar { height: 39px; flex: none; display: grid; grid-template-columns: 1fr auto 1fr; align-items: center; }
.titlebar h1 { grid-column: 2; font-size: 13px; line-height: 18px; font-weight: 700; }
.winbtns { display: flex; justify-content: flex-end; gap: 20px; padding-right: 11px; }
.inactive { color: #949494; }

/* browser */
.tabs { height: 34px; flex: none; display: flex; align-items: stretch; background: #e7e8ec; font-size: 13px; color: #5f6368; }
.tab { width: 240px; display: flex; align-items: center; padding: 0 7px 0 12px; }
.tab:first-child { width: 247px; padding-left: 20px; position: relative; }
.tab:first-child::after { content: ""; width: 1px; height: 20px; background: #8b8e93; margin-right: -7px; margin-left: 6px; }
.tab a { flex: 1; margin-left: 8px; overflow: hidden; white-space: nowrap; mask-image: linear-gradient(to right, #000 155px, transparent 178px); }
.tab > svg { width: 16px; }
.tab.active { background: #fff; border-radius: 8px 8px 0 0; }
.before-active { border-radius: 0 0 8px 0; }
.after-active::after { content: ""; width: 1px; height: 20px; background: #8b8e93; margin-left: 6px; margin-right: -7px; }
.newtab { margin-left: 13px; }
.newtab svg { width: 16px; }
.tabmenu { margin-left: auto; margin-right: 13px; }
.addressbar { height: 35px; flex: none; display: flex; align-items: center; padding: 0 12px 0 14px; }
.addressbar > button { margin-right: 16px; }
.omnibox { flex: 1; height: 28px; margin-left: -3px; border-radius: 14px; background: #f1f3f4; display: flex; align-items: center; padding: 0 10px 0 11px; font-size: 14px; color: #5f6368; }
.url { flex: 1; margin-left: 8px; white-space: nowrap; overflow: hidden; }
.url b { font-weight: 400; color: #202124; }
.exts { display: flex; align-items: center; gap: 16px; margin-left: 14px; }
.exts .avatar { width: 22px; height: 22px; margin: 0 -3px; }
.bookmarks { height: 34px; flex: none; display: flex; align-items: center; padding-left: 14px; font-size: 13px; color: #3c4043; white-space: nowrap; }
.bookmarks a { display: flex; align-items: center; gap: 8px; }
.bm-fb { width: 101px; } .bm-g { width: 32px; } .bm-gm { width: 74px; } .bm-ex { width: 151px; } .bm-bl { width: 153px; } .bm-gh { width: 151px; } .bm-js { width: 148px; } .bm-ev { width: 148px; } .bm-ea { width: 151px; }
.more { margin-left: auto; margin-right: 17px; font-size: 16px; font-weight: 600; color: #5f6368; }
.viewport { flex: 1; min-height: 0; position: relative; display: flex; border-top: 1px solid #dadce0; border-bottom: 1px solid #dadce0; background: #f4ece6; overflow: hidden; }
.formpage { flex: 1; }
.card { max-width: 768px; margin: 0 auto 12px; background: #fff; border: 1px solid #dadce0; border-top: 0; border-radius: 0 0 8px 8px; padding: 9px 23px 24px; color: #202124; font-family: Roboto, sans-serif; }
.card.next { border-top: 1px solid #dadce0; border-radius: 8px 8px 0 0; height: 40px; }
.card h2 { font-size: 16px; line-height: 24px; font-weight: 400; white-space: nowrap; }
.count { font-size: 12px; line-height: 16px; margin: 8px 0 28px; }
.answer { background: #f8f9fa; border-radius: 4px; padding: 10px; font-size: 14px; line-height: 20px; white-space: nowrap; }
.answer p + p { margin-top: 20px; }
.vscroll { width: 14px; background: #f1f1f1; display: flex; flex-direction: column; align-items: center; padding-top: 190px; color: #505050; }
.vscroll i { width: 12px; height: 61px; background: #c1c1c1; }
.vscroll svg { width: 6px; height: 4px; margin-top: auto; margin-bottom: 6px; }
.help { position: absolute; right: 29px; bottom: 13px; width: 20px; height: 20px; border-radius: 50%; background: #666; color: #fff; font-size: 14px; font-weight: 600; line-height: 20px; }
.downloads { height: 60px; flex: none; display: flex; align-items: center; }
.file { display: flex; align-items: center; height: 47px; width: 238px; border-right: 1px solid #ccc; padding-left: 20px; font-size: 14px; color: #3c4043; }
.file span { margin-left: 13px; width: 138px; text-align: left; white-space: nowrap; }
.file .up { margin-left: 18px; }
.showall { margin-left: auto; width: 103px; height: 32px; border: 1px solid #dadce0; border-radius: 4px; color: #4338ef; font-size: 13px; font-weight: 500; }
.dlclose { margin: 0 10px 0 11px; }
.taskbar { height: 48px; flex: none; display: flex; border-top: 1px solid #ddd; padding-left: 4px; }
.taskbar button { width: 48px; margin-right: 16px; padding-bottom: 3px; display: flex; justify-content: center; align-items: center; position: relative; }
.taskbar button:first-child { margin-right: 12px; }
.taskbar button svg { width: 28px; height: 28px; }
.running::after { content: ""; position: absolute; bottom: 0; width: 3px; height: 3px; background: #333; border-radius: 2px; }
.focused::after { content: ""; position: absolute; bottom: 0; width: 48px; height: 3px; background: #333; }
.tray { margin-left: auto; display: flex; align-items: center; gap: 11px; padding: 0 16px 3px 0; font-size: 14px; font-weight: 700; }
.tray time { margin-left: 34px; width: 66px; margin-right: -7px; white-space: nowrap; }
.tray i { width: 8px; height: 8px; border-radius: 50%; background: #333; }

/* drawing program: tabbed menu */
.menubar { height: 36px; flex: none; display: flex; border: 1px solid #dcdcdc; border-radius: 6px; }
.menubar a { width: 100px; margin-bottom: -1px; border-right: 1px solid #dcdcdc; border-bottom: 1px solid #dcdcdc; display: flex; align-items: center; justify-content: center; padding-top: 4px; }
.menubar a:last-of-type { width: 102px; }
.menubar .current { border-top: 3px solid #1ba1e8; border-bottom-color: #fff; margin-top: 1px; padding-top: 0; }
.quick { width: 149px; border-right: 1px solid #dcdcdc; display: flex; align-items: center; gap: 9px; padding: 0 4px 2px; }
.quick button:nth-of-type(4) { margin-left: -2px; }
.quick .car { margin: 4px -2px 0 -2px; }
.burger { margin: 2px 0 4px auto; width: 40px; border-radius: 6px; background: #ebebeb; display: flex; align-items: center; justify-content: center; }

/* tool bar */
.toolbar { height: 81px; flex: none; display: flex; padding: 1px 0 0 4px; white-space: nowrap; }
.big { height: 76px; display: flex; flex-direction: column; align-items: center; padding-top: 17px; gap: 8px; }
.big svg { width: 20px; height: 20px; }
.paste { width: 38px; } .est { width: 50px; } .txt { width: 92px; } .vtxt { width: 85px; }
.paste-car { margin: 38px 3px 0; }
.stack { display: grid; grid-template-rows: 38px 38px; align-content: start; }
.row { display: flex; align-items: center; }
.wide { display: flex; align-items: center; gap: 3px; text-align: left; }
.edit { width: 68px; padding-left: 3px; }
.sep { width: 7px; padding: 18px 3px 22px; height: 80px; }
.sep::before { content: ""; display: block; width: 1px; height: 100%; background: #d8d8d8; }
.sep.tall { padding-top: 7px; padding-bottom: 9px; }
.sep.mid { width: 11px; padding-left: 5px; }
.labels { width: 42px; padding-left: 2px; align-items: center; }
.props { width: 262px; }
.linesel { width: 98px; height: 36px; display: flex; align-items: center; position: relative; }
.linesel i { position: absolute; left: 8px; top: 11px; width: 51px; height: 14px; background: linear-gradient(#888, #888) center / 100% 2px no-repeat #fff; }
.props select { width: 100%; height: 36px; border-radius: 6px; background: #ebebeb; padding-left: 8px; }
.linesel .car, .areasel .car { position: absolute; right: 11px; top: 16px; }
.spin { width: 124px; height: 38px; margin-left: 1px; border-radius: 6px; background: #ebebeb; display: flex; align-items: center; gap: 18px; padding-left: 2px; }
.spin input { width: 63px; margin-right: -18px; }
.row .ic { margin-left: 3px; }
.ic + .car { margin-left: 7px; }
.areasel { width: 114px; position: relative; }
.swatch { width: 78px; height: 12px; margin-left: 2px; border: 1px solid #000; background: #729fcf; }
.swatch + .car { margin-left: 9px; }
.grid { display: grid; grid-template-rows: 38px 38px; align-content: start; place-items: center; }
.lines { grid-template-columns: 28px 24px 24px 24px 12px 22px 14px 22px 16px; }
.shapes { grid-template-columns: 26px 12px 24px 12px; }
.snaps { grid-template-columns: 26px 24px 26px 24px 26px; }
.on { background: #d6d6d6; border-radius: 6px; padding: 6px 4px; width: 24px; height: 27px; }
.select { width: 70px; height: 53px; margin-top: 12px; padding-top: 5px; background: #d6d6d6; border-radius: 6px; }
.insert { width: 97px; padding-left: 5px; }
.icons { gap: 8px; }
.insert .icons { padding-left: 2px; }
.arrange { padding-left: 4px; }
.arrange .wide .car { margin-left: 8px; }
.grow { flex: 1; }
.home { width: 80px; padding-left: 14px; }
.home .wide { justify-content: space-between; padding-right: 9px; }
.home .icons { justify-content: flex-end; gap: 10px; padding: 0 7px 10px 0; }

/* work area */
.work { flex: 1; min-height: 0; display: flex; padding-bottom: 1px; }
.pages { width: 175px; border-top: 1px solid #bbb; border-bottom: 1px solid #bbb; display: flex; flex-direction: column; padding: 0 6px 4px 2px; }
.pages header { height: 39px; display: flex; align-items: center; justify-content: space-between; padding-top: 3px; }
h2 { font-size: 13px; font-weight: 600; }
.pages header button { margin-right: -3px; color: #444; }
.list { flex: 1; border: 1px solid #bbb; border-width: 1px 0 0 1px; padding: 8px; }
.thumb { width: 150px; height: 178px; display: flex; justify-content: space-between; padding: 3px 3px 3px 15px; border: 1px solid #4e86a3; background: linear-gradient(#8fb6cc 20%, #a5cfe6 75%); }
.thumb b { font-size: 13px; font-weight: 500; padding-top: 1px; }
.thumb i { width: 121px; height: 170px; background: #fff; border: 1px solid #999; box-shadow: 0 1px 2px #555; }
.splitter { width: 7px; border: 1px solid #bbb; display: flex; align-items: center; }
.splitter i { flex: none; width: 8px; height: 73px; margin-left: -2px; background: #999; display: flex; align-items: center; justify-content: center; }
.splitter svg { width: 5px; height: 8px; }
.editor { flex: 1; min-width: 0; display: grid; grid-template: 25px 1fr 11px 25px / 22px 1fr 17px; }
.corner { padding: 2px 0 0 5px; }
.hruler { grid-area: 1 / 2 / 2 / 4; position: relative; margin: 4px 0 0; height: 16px; width: 1341px; background: linear-gradient(#bbb, #bbb) 0 0 / 411px 1px, linear-gradient(#bbb, #bbb) 0 100% / 411px 1px, linear-gradient(#bbb, #bbb) 928px 0 / 500px 1px, linear-gradient(#bbb, #bbb) 928px 100% / 500px 1px; background-repeat: no-repeat; }
.cells { font-size: 10px; line-height: 14px; color: #999; display: grid; }
.hruler .cells { width: 1332px; margin-left: 17px; grid-auto-flow: column; grid-auto-columns: 1fr; text-align: center; height: 16px; }
.hruler span { background: linear-gradient(#aaa, #aaa) 0 5px / 1px 4px no-repeat, linear-gradient(#aaa, #aaa) 50% 100% / 1px 2px no-repeat; }
.mark { position: absolute; top: -1px; width: 12px; height: 18px; }
.hruler .start { left: 405px; } .hruler .end { left: 922px; }
.vruler { grid-area: 2 / 1; width: 15px; margin-left: 5px; overflow: hidden; height: 838px; background: linear-gradient(#bbb, #bbb) 0 0 / 1px 40px, linear-gradient(#bbb, #bbb) 100% 0 / 1px 40px, linear-gradient(#bbb, #bbb) 0 39px / 100% 1px, linear-gradient(#bbb, #bbb) 0 793px / 100% 1px, linear-gradient(#bbb, #bbb) 0 793px / 1px 50px, linear-gradient(#bbb, #bbb) 100% 793px / 1px 50px; background-repeat: no-repeat; }
.vruler .cells { height: 843px; margin-top: -2px; grid-auto-rows: 1fr; }
.vruler span { writing-mode: vertical-rl; transform: rotate(180deg); text-align: center; line-height: 15px; background: linear-gradient(#aaa, #aaa) 50% 0 / 3px 1px no-repeat, linear-gradient(#aaa, #aaa) 0 50% / 2px 1px no-repeat; }
.canvas { grid-area: 2 / 2; min-width: 0; padding: 12px 0 0 383px; }
.sheet { width: 571px; height: 809px; padding: 27px 26px; border: 1px solid #8a8a8a; box-shadow: 0 1px 6px #777; background: #fff; }
.margins { height: 100%; border: 1px solid #ccc; }
.vbar { grid-area: 2 / 3; padding: 189px 0 0 5px; }
.vbar i, .hbar i { display: block; background: #868686; border-radius: 4px; }
.vbar i { width: 8px; height: 439px; }
.hbar { grid-area: 3 / 1 / 4 / 4; padding: 3px 0 0 158px; }
.hbar i { width: 1055px; height: 8px; }
.layers { grid-area: 4 / 1 / 5 / 4; display: flex; align-items: stretch; padding-left: 15px; }
.layers button { width: 8px; margin-right: 14px; padding-top: 2px; }
.layers svg { width: 8px; height: 14px; }
.layers a { padding: 5px 13px 0; line-height: 16px; border-bottom: 3px solid transparent; }
.layers a.current { border-color: #999; margin-left: 8px; width: 68px; padding: 5px 0 0; text-align: center; }

/* properties side bar */
.sidebar { width: 354px; border: 1px solid #bbb; border-width: 1px 0; display: flex; padding-left: 4px; }
.deck { width: 311px; margin: 3px 0; border: 1px solid #e8e8e8; overflow: hidden; flex: none; }
.deck header { height: 26px; display: flex; align-items: center; padding-left: 4px; }
.grip { width: 2px; height: 14px; margin-right: 7px; background: repeating-linear-gradient(#777 0 2px, transparent 2px 4px); }
.deck header button { margin: 7px 0 0 auto; color: #444; }
.deck h3 { height: 28px; display: flex; align-items: center; gap: 4px; padding-left: 5px; font-size: 13px; font-weight: 600; background: linear-gradient(#eee, #fff); }
.deck h3 svg { width: 12px; height: 8px; }
.deck h3 .opt { width: 10px; height: 10px; margin: 8px 4px 0 auto; }
.deck form { width: 352px; display: grid; grid-template-columns: 114px 1fr; column-gap: 8px; row-gap: 8px; padding-top: 6px; align-items: center; font-size: 13px; }
.deck form > label:not(.check) { text-align: right; }
.deck select { height: 36px; border-radius: 6px; background: #ebebeb; padding-left: 8px; }
.insertpic { grid-column: 2; height: 30px; margin: -1px 0 -1px -1px; border-radius: 6px; background: #ebebeb; display: flex; align-items: center; gap: 6px; padding-left: 58px; }
.insertpic svg { width: 12px; }
.check { grid-column: 2; display: flex; align-items: center; gap: 8px; height: 22px; padding-left: 3px; white-space: nowrap; }
.check input { appearance: none; width: 16px; height: 16px; border: 1px solid #bbb; border-radius: 3px; display: grid; place-items: center; }
.check input::before { content: ""; width: 10px; height: 5px; border: solid #333; border-width: 0 0 3px 3px; transform: rotate(-48deg); margin-top: -4px; }
.decks { display: flex; flex-direction: column; align-items: center; gap: 3px; padding: 4px 4px 0; width: 38px; }
.decks button { width: 32px; height: 32px; display: grid; place-items: center; border: 1px solid transparent; border-radius: 3px; }
.decks .dots { height: 36px; border-bottom-color: #e4e4e4; padding-bottom: 10px; width: 22px; border-radius: 0; }
.decks .current { border-color: #bbb; }
.decks svg { width: 20px; height: 20px; }

/* status bar */
.status { height: 23px; flex: none; border-top: 1px solid #bbb; display: flex; align-items: center; line-height: 16px; }
.status span { display: flex; align-items: center; border-right: 1px solid #dcdcdc; height: 16px; margin-top: 2px; white-space: nowrap; }
.st-slide { width: 78px; padding-left: 10px; }
.status .st-master { flex: 1; padding-left: 578px; }
.st-pos { width: 291px; padding-left: 8px; gap: 6px; }
.st-size { width: 295px; padding-left: 6px; gap: 5px; }
.status .st-pos { border: 0; }
.st-save { width: 24px; padding-left: 7px; }
.st-fit { width: 51px; justify-content: flex-end; padding-right: 2px; }
.st-save svg { width: 12px; height: 12px; }
.st-zoom { width: 143px; gap: 5px; padding-left: 9px; }
.st-zoom svg { width: 10px; height: 10px; }
.status .st-pct { width: 42px; padding-left: 8px; border: 0; }
.st-zoom input { appearance: none; width: 97px; height: 12px; background: linear-gradient(#999, #999) 48px 50% / 1px 8px no-repeat, linear-gradient(#999, #999) center / 100% 2px no-repeat; }
.st-zoom input::-webkit-slider-thumb { appearance: none; width: 4px; height: 12px; background: #555; border-radius: 1px; }
```
